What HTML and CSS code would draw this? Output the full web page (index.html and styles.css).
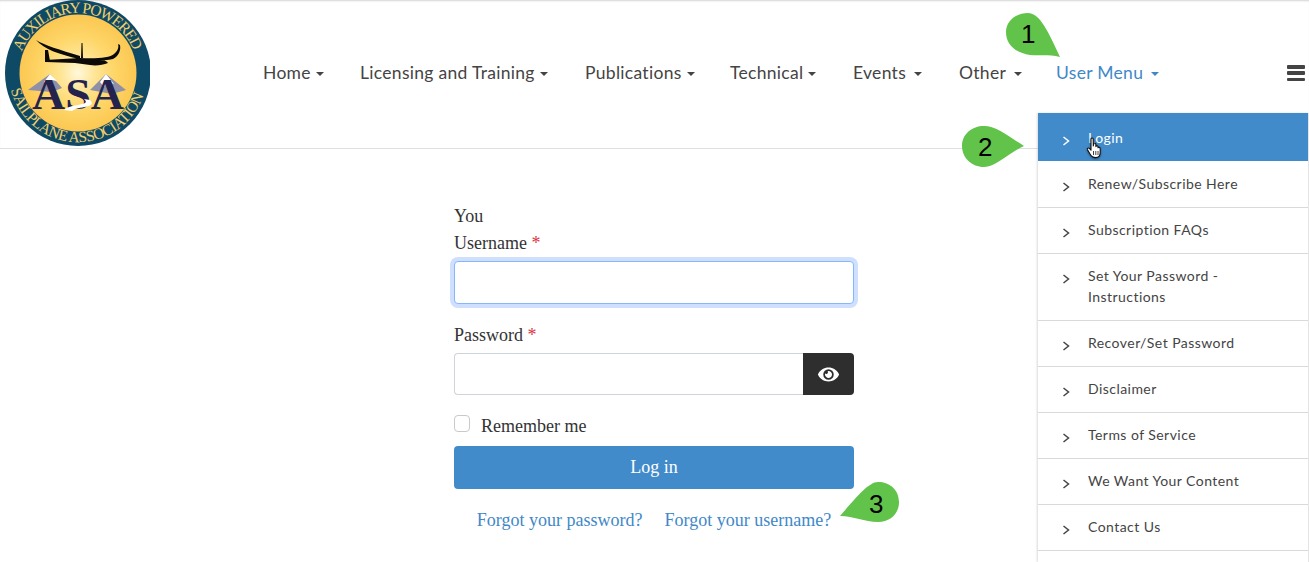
FILE: index.html
```html
<!DOCTYPE html>
<html lang="en">
<head>
<meta charset="utf-8">
<title>User Menu Login</title>
<link rel="stylesheet" href="styles.css">
</head>
<body>
<header class="site-header">
  <a class="logo" href="#">
    <svg class="logo-svg" viewBox="0 0 150 148" width="150" height="148">
      <defs>
        <radialGradient id="sun" cx="50%" cy="50%" r="52%">
          <stop offset="0" stop-color="#fff8dc"/>
          <stop offset="0.28" stop-color="#ffe596"/>
          <stop offset="0.6" stop-color="#fed668"/>
          <stop offset="1" stop-color="#fbc650"/>
        </radialGradient>
        <path id="arcTop" d="M21.8 51.9 A60 60 0 0 1 133.6 50.5"/>
        <path id="arcBottom" d="M11 89.7 A69 69 0 0 0 146 85"/>
      </defs>
      <circle cx="78" cy="73" r="73" fill="#0e4a66"/>
      <circle cx="78" cy="73" r="58.5" fill="url(#sun)"/>
      <text class="logo-ring"><textPath href="#arcTop" textLength="144" lengthAdjust="spacing">AUXILIARY POWERED</textPath></text>
      <text class="logo-ring"><textPath href="#arcBottom" textLength="178" lengthAdjust="spacing">SAILPLANE ASSOCIATION</textPath></text>
      <path fill="#0c0a08" d="M36 40 C44 45 60 50 80 56 L80 59 C60 55 44 49 36 40Z M45 50 L48 50 L50 61 L45 62Z M45 60 L80 58 L100 59 C104 60 107 61 108 63 C103 65 96 66 90 65 L75 63 L46 62Z M80 58 C95 59 110 58 114 54 C118 51 119 47 118 44 L120 45 C121 50 119 56 113 59 C105 61 90 61 80 60Z M81.5 43 L82.5 43 L83 58 L81 58Z"/>
      <path fill="#8f8fa8" d="M28 90 L50 74 L62 88 L52 92 Z M90 90 L106 74 L126 90 L112 94 Z"/>
      <path fill="#ffffff" d="M44 82 L50 74 L57 81 L52 80 L49 85 Z M100 82 L106 74 L114 84 L108 82 L104 87 Z"/>
      <text class="logo-asa" x="32" y="109" textLength="92" lengthAdjust="spacingAndGlyphs">ASA</text>
      <path fill="#ffffff" d="M64 110 C72 103 92 106 84 99 L90 100 C98 108 78 106 72 111 Z"/>
    </svg>
  </a>
  <nav class="main-nav">
    <a class="nav-link nav-home" href="#">Home<span class="caret"></span></a>
    <a class="nav-link nav-lic" href="#">Licensing and Training<span class="caret"></span></a>
    <a class="nav-link nav-pub" href="#">Publications<span class="caret"></span></a>
    <a class="nav-link nav-tech" href="#">Technical<span class="caret"></span></a>
    <a class="nav-link nav-events" href="#">Events<span class="caret wide"></span></a>
    <a class="nav-link nav-other" href="#">Other<span class="caret wide"></span></a>
    <a class="nav-link nav-user" href="#">User Menu<span class="caret wide"></span></a>
  </nav>
  <button class="hamburger" type="button" aria-label="Menu"><span></span><span></span><span></span></button>
</header>

<main class="content">
  <form class="login-form">
    <p class="intro">You</p>
    <label class="field-label">Username <span class="req">*</span></label>
    <input class="text-input focused" type="text">
    <label class="field-label second">Password <span class="req">*</span></label>
    <div class="password-group">
      <input class="text-input pw" type="password">
      <button class="eye-btn" type="button" aria-label="Show password">
        <svg viewBox="0 0 576 512" width="21" height="19"><path fill="#fff" d="M572.52 241.4C518.29 135.59 410.93 64 288 64S57.68 135.64 3.48 241.41a32.35 32.35 0 0 0 0 29.19C57.71 376.41 165.07 448 288 448s230.32-71.64 284.52-177.41a32.35 32.35 0 0 0 0-29.19zM288 400a144 144 0 1 1 144-144 143.93 143.93 0 0 1-144 144zm0-240a95.31 95.31 0 0 0-25.31 3.79 47.85 47.85 0 0 1-66.9 66.9A95.78 95.78 0 1 0 288 160z"/></svg>
      </button>
    </div>
    <label class="remember"><input class="check" type="checkbox"><span>Remember me</span></label>
    <button class="login-btn" type="button">Log in</button>
    <div class="links">
      <a href="#">Forgot your password?</a>
      <a href="#">Forgot your username?</a>
    </div>
  </form>
</main>

<ul class="dropdown">
  <li class="active"><a href="#"><svg class="chev" viewBox="0 0 8 10" width="8" height="10"><path d="M1.5 1 L6.5 5 L1.5 9"/></svg><span>Login</span></a></li>
  <li><a href="#"><svg class="chev" viewBox="0 0 8 10" width="8" height="10"><path d="M1.5 1 L6.5 5 L1.5 9"/></svg><span>Renew/Subscribe Here</span></a></li>
  <li><a href="#"><svg class="chev" viewBox="0 0 8 10" width="8" height="10"><path d="M1.5 1 L6.5 5 L1.5 9"/></svg><span>Subscription FAQs</span></a></li>
  <li><a href="#"><svg class="chev" viewBox="0 0 8 10" width="8" height="10"><path d="M1.5 1 L6.5 5 L1.5 9"/></svg><span class="narrow">Set Your Password - Instructions</span></a></li>
  <li><a href="#"><svg class="chev" viewBox="0 0 8 10" width="8" height="10"><path d="M1.5 1 L6.5 5 L1.5 9"/></svg><span>Recover/Set Password</span></a></li>
  <li><a href="#"><svg class="chev" viewBox="0 0 8 10" width="8" height="10"><path d="M1.5 1 L6.5 5 L1.5 9"/></svg><span>Disclaimer</span></a></li>
  <li><a href="#"><svg class="chev" viewBox="0 0 8 10" width="8" height="10"><path d="M1.5 1 L6.5 5 L1.5 9"/></svg><span>Terms of Service</span></a></li>
  <li><a href="#"><svg class="chev" viewBox="0 0 8 10" width="8" height="10"><path d="M1.5 1 L6.5 5 L1.5 9"/></svg><span>We Want Your Content</span></a></li>
  <li><a href="#"><svg class="chev" viewBox="0 0 8 10" width="8" height="10"><path d="M1.5 1 L6.5 5 L1.5 9"/></svg><span>Contact Us</span></a></li>
  <li class="blank"></li>
</ul>

<svg class="cursor" viewBox="0 0 16 22" width="16" height="22">
  <path fill="#fff" stroke="#111" stroke-width="1.1" stroke-linejoin="round" d="M5 2 C5 .6 7.2 .6 7.2 2 L7.3 9 L7.8 6.6 C8.2 5.6 9.8 5.8 9.8 7 L9.9 9.6 C10.2 8.4 12 8.6 12 9.8 L12 10.8 C12.4 10 14.2 10.2 14.2 11.4 L14.2 15.5 C14.2 18.5 12.6 20.6 9.6 20.6 C6.6 20.6 5.4 19.4 4 17 L1.4 12.6 C.8 11.4 2.4 10.4 3.4 11.4 L5 13.2 Z"/>
  <path stroke="#111" stroke-width=".8" fill="none" d="M7.5 14v4M9.8 14v4M12 14v4"/>
</svg>

<div class="marker marker-1"><svg viewBox="0 0 54 44" width="54" height="44"><path fill="#62c34a" d="M0 19C0 8 10 0 22 0 C34 0 43 20 54 44 C42 41 33 43 24 42 C10 40 0 32 0 19Z"/></svg><span>1</span></div>
<div class="marker marker-2"><svg viewBox="0 0 62 41" width="62" height="41"><path fill="#62c34a" d="M0 20C0 8 10 0 22 0 C34 0 46 10 62 20 C46 27 34 41 22 41 C10 41 0 32 0 20Z"/></svg><span>2</span></div>
<div class="marker marker-3"><svg viewBox="0 0 59 40" width="59" height="40"><path fill="#62c34a" d="M59 20C59 8 50 0 38 0 C28 0 14 18 0 34 C14 34 24 40 38 40 C50 40 59 32 59 20Z"/></svg><span>3</span></div>
</body>
</html>
```

FILE: styles.css
```css
* { box-sizing: border-box; }
html, body { height: 100%; }
html { overflow: hidden; }
body {
  margin: 0;
  height: 562px;
  position: relative;
  overflow: hidden;
  background: #fff;
  color: #333;
  font-family: "Liberation Serif", "Times New Roman", serif;
  font-size: 18px;
  line-height: 27px;
}
a { text-decoration: none; }

.site-header {
  height: 149px;
  display: flex;
  align-items: center;
  border-bottom: 1px solid #dfdfdf;
  box-shadow: inset 0 2px 2px -1px #d4d4d4;
}
.logo { flex: 0 0 auto; align-self: flex-start; height: 148px; }
.logo-svg { display: block; }
.logo-ring {
  font-family: "Liberation Serif", serif;
  font-size: 15.5px;
  font-weight: 400;
  fill: #f3cf6a;
}
.logo-asa {
  font-family: "Liberation Serif", serif;
  font-size: 44px;
  font-weight: 700;
  fill: #23234d;
}

.main-nav {
  flex: 1;
  display: flex;
  align-items: center;
  padding-left: 113px;
  margin-top: -4px;
  font-family: Lato, "Open Sans", sans-serif;
  font-size: 17.5px;
  letter-spacing: .3px;
}
.nav-link { color: #444; white-space: nowrap; display: flex; align-items: center; }
.nav-home { width: 97px; }
.nav-lic { width: 225px; }
.nav-pub { width: 145px; }
.nav-tech { width: 123px; }
.nav-events { width: 106px; }
.nav-other { width: 97px; }
.nav-user { color: #3f88c8; }
.caret {
  width: 0; height: 0;
  margin-left: 5px;
  margin-top: 3px;
  border-left: 4px solid transparent;
  border-right: 4px solid transparent;
  border-top: 4px solid currentColor;
}
.caret.wide { margin-left: 8px; }

.hamburger {
  position: absolute;
  left: 1287px;
  top: 65px;
  width: 18px;
  height: 16px;
  padding: 0;
  border: 0;
  background: none;
  display: flex;
  flex-direction: column;
  justify-content: space-between;
}
.hamburger span { display: block; height: 3.5px; background: #444; border-radius: 1px; }

.content { padding: 54px 1px 0 0; }
.login-form { width: 400px; margin: 0 auto; }
.intro { margin: 0; }
.field-label { display: block; margin-bottom: 4px; }
.field-label.second { margin-top: 18px; }
.req { color: #dc3545; }
.text-input {
  display: block;
  width: 100%;
  height: 42px;
  border: 1px solid #ced4da;
  border-radius: 4px;
  background: #fff;
  outline: 0;
}
.focused {
  height: 43px;
  border-color: #86b7fe;
  box-shadow: 0 0 0 4px #cfe0ff;
}
.password-group { display: flex; }
.pw { flex: 1; border-right: 0; border-radius: 4px 0 0 4px; }
.eye-btn {
  width: 51px;
  height: 42px;
  padding: 0;
  border: 0;
  border-radius: 0 4px 4px 0;
  background: #2e2e2e;
  display: flex;
  align-items: center;
  justify-content: center;
}
.remember { display: flex; align-items: center; margin-top: 18px; height: 26px; }
.check {
  appearance: none;
  -webkit-appearance: none;
  width: 16px;
  height: 17px;
  margin: -5px 11px 0 0;
  border: 1px solid #c9c9c9;
  border-radius: 4px;
  background: #fff;
}
.login-btn {
  display: block;
  width: 100%;
  height: 43px;
  margin-top: 7px;
  border: 0;
  border-radius: 4px;
  background: #428bca;
  color: #fff;
  font: inherit;
}
.links {
  display: flex;
  justify-content: center;
  gap: 22px;
  margin-top: 18px;
}
.links a { color: #3f88c8; }

.dropdown {
  position: absolute;
  left: 1038px;
  top: 113px;
  width: 271px;
  margin: 0;
  padding: 0;
  list-style: none;
  background: #fff;
  box-shadow: -1px 0 2px rgba(0,0,0,.15);
  border-right: 1px solid #e4e4e4;
  font-family: Lato, "Open Sans", sans-serif;
  font-size: 14px;
  letter-spacing: .45px;
  line-height: 21px;
}
.dropdown li { border-bottom: 1px solid #d9d9d9; }
.dropdown a { display: flex; padding: 11px 24px 13px; color: #444; }
.dropdown span { margin-left: 18px; }
.dropdown .narrow { width: 150px; }
.dropdown .active { background: #428bca; background-clip: padding-box; border-bottom-color: #fff; }
.dropdown .active a { color: #fff; padding: 14px 24px 13px; }
.dropdown .blank { height: 11px; border-bottom: 0; }
.chev { flex: 0 0 8px; margin-top: 9px; fill: none; stroke: currentColor; stroke-width: 1.5; }

.cursor { position: absolute; left: 1086px; top: 137px; filter: drop-shadow(0 1px 1px rgba(0,0,0,.4)); }

.marker { position: absolute; }
.marker svg { display: block; }
.marker span {
  position: absolute;
  font-family: "Liberation Sans", sans-serif;
  font-size: 26px;
  line-height: 30px;
  color: #000;
}
.marker-1 { left: 1006px; top: 13px; }
.marker-1 span { left: 15px; top: 6px; }
.marker-2 { left: 962px; top: 126px; }
.marker-2 span { left: 16px; top: 6px; }
.marker-3 { left: 840px; top: 482px; }
.marker-3 span { left: 29px; top: 7px; }
```
